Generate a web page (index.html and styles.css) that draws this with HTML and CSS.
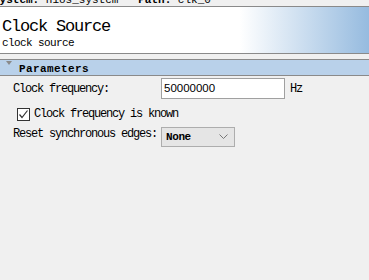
FILE: index.html
```html
<!DOCTYPE html>
<html lang="en">
<head>
    <meta charset="UTF-8">
    <title>Clock Source</title>
    <link rel="stylesheet" href="styles.css">
</head>
<body>
    <div class="crumb">
        <div class="crumb-text"><b>System:</b> nios_system &nbsp; <b>Path:</b> clk_0</div>
    </div>

    <div class="header">
        <div class="title">Clock Source</div>
        <div class="subtitle">clock source</div>
    </div>

    <div class="section-bar">
        <span class="arrow"></span>
        <span class="section-name">Parameters</span>
    </div>

    <div class="params">
        <div class="row">
            <label class="label">Clock frequency:</label>
            <div class="textbox">50000000</div>
            <span class="unit">Hz</span>
        </div>

        <div class="row check-row">
            <span class="check">
                <svg width="11" height="11" viewBox="0 0 11 11">
                    <path d="M1.5 5.5 L4 8.5 L9.5 1.5" fill="none" stroke="#333" stroke-width="1.2"/>
                </svg>
            </span>
            <span class="check-label">Clock frequency is known</span>
        </div>

        <div class="row">
            <label class="label">Reset synchronous edges:</label>
            <div class="select">
                <span class="select-value">None</span>
                <svg width="9" height="6" viewBox="0 0 9 6">
                    <path d="M0.5 0.5 L4.5 4.5 L8.5 0.5" fill="none" stroke="#777" stroke-width="1"/>
                </svg>
            </div>
        </div>
    </div>
</body>
</html>
```

FILE: styles.css
```css
body {
    margin: 0;
    padding: 0;
    background-color: #f0f0f0;
    font-family: 'Liberation Mono', 'DejaVu Sans Mono', monospace;
    font-size: 12px;
    color: #000;
}

.crumb {
    height: 6px;
    overflow: hidden;
    border-bottom: 1px solid #8a8a8a;
}

.crumb-text {
    margin-top: -6px;
    margin-left: -7px;
    line-height: 12px;
    white-space: nowrap;
    font-size: 11px;
}

.header {
    height: 46px;
    background: linear-gradient(to right, #fff 65%, #96bbdf 100%);
    border-bottom: 1px solid #8a8a8a;
    padding-left: 2px;
}

.title {
    padding-top: 10px;
    font-size: 17px;
    letter-spacing: -1.2px;
    line-height: 20px;
}

.subtitle {
    font-size: 11px;
    letter-spacing: -0.6px;
    line-height: 12px;
    margin-top: 0;
}

.section-bar {
    margin-top: 5px;
    height: 15px;
    background-color: #b9d1ea;
    border-top: 1px solid #8a8a8a;
    border-bottom: 1px solid #8a8a8a;
    display: flex;
    align-items: center;
}

.arrow {
    width: 0;
    height: 0;
    margin: 0 7px 9px 6px;
    border-left: 3px solid transparent;
    border-right: 3px solid transparent;
    border-top: 4px solid #8a8a8a;
}

.section-name {
    font-weight: bold;
    font-size: 11px;
    letter-spacing: 0.4px;
    padding-top: 3px;
}

.params {
    padding: 2px 0 0 13px;
}

.row {
    display: flex;
    align-items: center;
}

.label {
    width: 148px;
    letter-spacing: -1.2px;
}

.textbox {
    width: 120px;
    height: 19px;
    line-height: 19px;
    padding-left: 2px;
    background-color: #fff;
    border: 1px solid #a0a0a0;
    font-family: 'Liberation Sans', Arial, sans-serif;
    font-size: 11.5px;
}

.unit {
    margin-left: 5px;
    letter-spacing: -1.2px;
}

.check-row {
    margin-top: 8px;
    padding-left: 4px;
}

.check {
    width: 11px;
    height: 11px;
    border: 1px solid #333;
    background-color: #fff;
    display: flex;
}

.check-label {
    margin-left: 4px;
    letter-spacing: -1.2px;
}

.select {
    margin-top: 6px;
    width: 62px;
    height: 18px;
    padding: 0 6px 0 4px;
    background-color: #e5e5e5;
    border: 1px solid #adadad;
    display: flex;
    align-items: center;
    justify-content: space-between;
}

.select-value {
    font-weight: bold;
    font-size: 11px;
    letter-spacing: -0.4px;
}
```
